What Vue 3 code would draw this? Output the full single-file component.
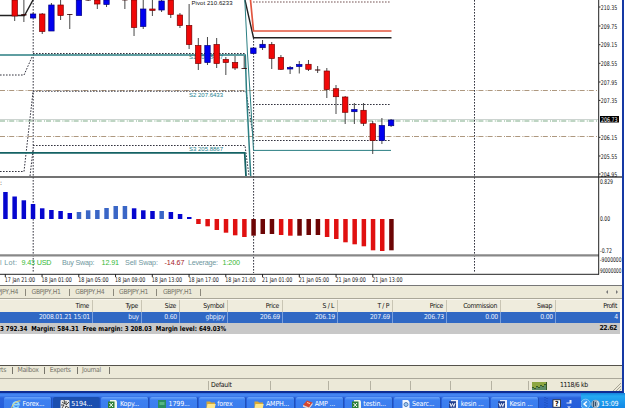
<script setup>
const candleX = i => 14.7 + i * 9.18
// [index, high, low, top, bottom, type]
const candles = [
  [0, 0, 21, 0, 16, 'down'], [1, 0, 22, 14.2, 15.4, 'flat'], [2, 13, 18, 14, 18, 'up'],
  [3, 13, 34, 14, 31.5, 'down'], [4, 3, 31, 5, 31, 'up'], [5, 0, 20, 5, 15.5, 'down'],
  [6, 14, 29, 14, 14.8, 'flat'], [7, 0, 15, 0, 15.5, 'up'], [8, 0, 1, 0, 0.5, 'flat'],
  [9, 0, 9, 0, 4, 'down'], [10, 0, 7, 0, 4.5, 'up'], [12, 0, 9, 0, 0.4, 'flat'],
  [13, 0, 36, 0, 27.5, 'down'], [14, 0, 29, 9, 26.5, 'up'], [15, 0, 16, 9, 10.4, 'down'],
  [16, 0, 12, 1, 10, 'up'], [17, 0, 18, 0, 14.5, 'down'], [18, 13, 28, 15, 25.5, 'down'],
  [19, 4, 49, 25.5, 44.5, 'down'], [20, 38, 70, 45.5, 63.5, 'down'], [21, 37, 65, 45.5, 62.5, 'up'],
  [22, 38, 68, 44.5, 63.5, 'down'], [23, 57, 75, 59.5, 62.5, 'down'], [24, 56, 70, 62.5, 68, 'down'],
  [25, 56, 69, 68, 68.8, 'flat'], [26, 47, 54, 48, 53.5, 'up'], [27, 40, 50, 44.3, 47.7, 'up'],
  [28, 42, 69, 44.5, 58.5, 'down'], [29, 55, 70, 57.5, 69.3, 'down'], [30, 66, 74, 67.5, 69, 'up'],
  [31, 61, 73.5, 64.5, 66.5, 'up'], [32, 60, 71, 64.3, 69.3, 'down'], [33, 66, 73, 69.5, 70.5, 'flat'],
  [34, 68, 98, 71, 89.5, 'down'], [35, 85, 114, 88.7, 96.7, 'down'], [36, 96, 124, 97, 112.3, 'down'],
  [37, 103, 124, 109.5, 111.7, 'up'], [38, 103, 126, 110.3, 123.3, 'down'], [39, 121, 154, 123.7, 140.5, 'down'],
  [40, 118, 144, 125.5, 140.5, 'up'], [41, 119, 127, 120, 125.7, 'up'],
]

const rising = [192, 196.5, 200.3, 204, 208.3, 210, 211, 213, 212, 210.3, 210, 208, 206, 206, 208.3, 210.3, 211, 211, 212, 214, 217]
const falling = [224, 226.3, 230, 232.7, 235.3, 237, 235.7, 234, 234, 235, 235.7, 235.7, 235, 235, 237, 239, 242.3, 244.3, 246.3, 250.3, 251, 250.3]
const light = [8, 9, 10, 11, 12, 13, 17]
const dark = [6, 7, 8, 11, 12, 13, 21]
const bars = [
  ...rising.map((y, i) => ({ x: 3.2 + i * 9.19, y, h: 219 - y, c: light.includes(i) ? 'bar-light' : 'bar-blue' })),
  ...falling.map((y, i) => ({ x: 3.2 + (i + 21) * 9.19, y: 219, h: y - 219, c: dark.includes(i) ? 'bar-dark' : 'bar-red' })),
]

const prices = [['210.35', 7], ['209.75', 26], ['209.15', 44.7], ['208.55', 63.3], ['207.95', 82], ['207.35', 100.4], ['206.15', 137.3], ['205.55', 156], ['204.95', 174]]
const times = ['17 Jan 21:00', '18 Jan 01:00', '18 Jan 05:00', '18 Jan 09:00', '18 Jan 13:00', '18 Jan 17:00', '18 Jan 21:00', '21 Jan 01:00', '21 Jan 05:00', '21 Jan 09:00', '21 Jan 13:00']
const account = [
  ['l Lot:', 0, 17, 'lbl'], ['9.43 USD', 21.5, 30, 'pos'], ['Buy Swap:', 62, 32.5, 'lbl'], ['12.91', 101.5, 17.5, 'pos'],
  ['Sell Swap:', 125, 33, 'lbl'], ['-14.67', 164.5, 20, 'neg'], ['Leverage:', 188, 30, 'lbl'], ['1:200', 222.5, 17.5, 'pos'],
]

const chartTabs = ['GBPJPY,H4', 'GBPJPY,H1', 'GBPJPY,H4', 'GBPJPY,H1', 'GBPJPY,H1']
const columns = [
  ['Time', '2008.01.21 15:01'], ['Type', 'buy'], ['Size', '0.60'], ['Symbol', 'gbpjpy'], ['Price', '206.69'], ['S / L', '206.19'],
  ['T / P', '207.69'], ['Price', '206.73'], ['Commission', '0.00'], ['Swap', '0.00'], ['Profit', '4'],
]
const terminalTabs = ['Alerts', 'Mailbox', 'Experts', 'Journal']
const tasks = [
  ['ie', 'Forex...'], ['mt', '5194...'], ['xls', 'Kopy...'], ['green', '1799...'], ['folder', 'forex'], ['folder', 'AMPH...'],
  ['book', 'AMP ...'], ['xls', 'testin...'], ['find', 'Searc...'], ['doc', 'kesin ...'], ['doc', 'Kesin ...'],
]
</script>

<template>
  <div class="desktop">
    <div class="window">
      <svg class="chart" viewBox="0 0 622 285" width="622" height="285">
        <!-- levels -->
        <path class="bid" d="M0 119.5H598" />
        <path class="dashdot green" d="M0 121H598" />
        <path class="dashdot brown" d="M0 90.5H598M0 136.5H598" />
        <path class="dot" d="M0 75H24L32 57M33 53.5H245M33 91.2H246L253 135M0 171.5H24L33 92M30 176L33 150M33 145.5H245L249 176M253 104.5H391M253 140.5H391" />
        <path class="dot rose" d="M253 2H391" />
        <path class="dot" d="M33.2 0V273M253.6 38V273M474.5 0V273" />
        <path class="black" d="M0 15.5H24.5L33 0M245 0L253.5 37.7H391.5" />
        <path class="salmon" d="M250.5 0L253.5 31H391.5" />
        <path class="teal" d="M0 55H245.3L246.5 92L250.7 176" />
        <path class="teal thin" d="M244.8 0L247.5 54L250.5 100L253.5 150.4H391" />
        <path class="teal thick" d="M0 152.8H244.7L246 176" />

        <g class="tag">
          <text class="ink" x="191.5" y="5.4" textLength="41">Pivot 210.6233</text>
          <text x="189" y="59.4" textLength="34">S1 208.8467</text>
          <text x="189" y="97.4" textLength="34">S2 207.6433</text>
          <text x="189" y="151.4" textLength="34">S3 205.8867</text>
        </g>

        <g v-for="c in candles" :key="c[0]" :class="c[5]">
          <line :x1="candleX(c[0])" :x2="candleX(c[0])" :y1="c[1]" :y2="c[2]" />
          <rect :x="candleX(c[0]) - 2.7" :y="c[3]" width="5.4" :height="c[4] - c[3]" />
        </g>

        <rect v-for="(b, i) in bars" :key="'b' + i" :class="b.c" :x="b.x" :y="b.y" width="4.5" :height="b.h" />

        <!-- pane frames -->
        <path class="split" d="M0 177H622" />
        <path class="split soft" d="M0 255.3H599" />
        <path class="axis" d="M598.7 0V274.5M0 274.3H599" />

        <g class="scale">
          <g v-for="p in prices" :key="p[0]">
            <path class="axis" :d="`M599 ${p[1]}h1.5`" />
            <text x="600.8" :y="p[1] + 2.5" textLength="16.4" lengthAdjust="spacingAndGlyphs">{{ p[0] }}</text>
          </g>
          <rect x="600" y="116" width="19" height="6.5" />
          <text class="now" x="601" y="121.7" textLength="16.5" lengthAdjust="spacingAndGlyphs">206.73</text>
          <text x="600" y="184.4" textLength="13" lengthAdjust="spacingAndGlyphs">0.829</text>
          <text x="600" y="221.3" textLength="10" lengthAdjust="spacingAndGlyphs">0.00</text>
          <text x="600" y="253.3" textLength="12" lengthAdjust="spacingAndGlyphs">-0.72</text>
          <text x="600" y="262.4" textLength="21.5" lengthAdjust="spacingAndGlyphs">-9000000</text>
          <text x="600" y="272.9" textLength="21.5" lengthAdjust="spacingAndGlyphs">90000000</text>
          <text x="0" y="185">:</text>
          <g v-for="(t, i) in times" :key="t + i">
            <path class="axis" :d="`M${5.3 + i * 36.75} 274v3`" />
            <text :x="4.8 + i * 36.75" y="282" textLength="30.3" lengthAdjust="spacingAndGlyphs">{{ t }}</text>
          </g>
        </g>
        <g class="account">
          <text v-for="a in account" :key="a[0]" :class="a[3]" :x="a[1]" y="264.6" :textLength="a[2]">{{ a[0] }}</text>
        </g>
      </svg>

      <div class="chart-tabs">
        <span v-for="(t, i) in chartTabs" :key="i" class="chart-tab">{{ t }}</span>
        <svg class="arrows" width="14" height="6" viewBox="0 0 14 6">
          <path d="M3 1L1 3L3 5ZM11 1L13 3L11 5Z" />
        </svg>
      </div>

      <div class="orders">
        <div class="row head"><span v-for="(c, i) in columns" :key="i">{{ c[0] }}</span></div>
        <div class="row order"><span v-for="(c, i) in columns" :key="i">{{ c[1] }}</span></div>
        <div class="summary">
          <svg width="228" height="11"><text x="0" y="8" textLength="226" lengthAdjust="spacingAndGlyphs">3 792.34&#160; Margin: 584.31&#160; Free margin: 3 208.03&#160; Margin level: 649.03%</text></svg>
          <b>22.62</b>
        </div>
      </div>

      <div class="terminal-tabs">
        <span v-for="t in terminalTabs" :key="t">{{ t }}</span>
      </div>

      <div class="status">
        <span></span><span>Default</span><span></span><span></span><span></span><span></span><span></span>
        <span class="traffic">
          <svg width="15" height="8" viewBox="0 0 15 8">
            <rect width="15" height="8" fill="#375a24" />
            <path d="M1 0V5M3 0V6M5 0V4M7 0V5M9 0V3M11 0V4M13 0V2" stroke="#b3c850" stroke-width="1.4" />
            <path d="M1 6V8M3 7V8M5 5V8M7 6V8M9 4V8M11 5V8M13 3V8" stroke="#7fb6a0" stroke-width="1.1" />
          </svg>
          1118/6 kb
        </span>
        <svg class="grip" width="8" height="8" viewBox="0 0 8 8"><path d="M0 8L8 0M3 8L8 3M6 8L8 6" /></svg>
      </div>
    </div>

    <div class="taskbar">
      <div v-for="(t, i) in tasks" :key="i" class="task" :class="{ active: i === 1 }">
        <svg class="icon" width="10" height="9" viewBox="0 0 10 9">
          <g v-if="t[0] === 'ie'">
            <path d="M7.6 6.4A3 3 0 1 1 8 4.6H3" fill="none" stroke="#8fdcff" stroke-width="1.6" />
            <path d="M1 8.5C-.5 6 6 0 9.4 1" fill="none" stroke="#f2d264" />
          </g>
          <g v-else-if="t[0] === 'mt'">
            <rect x=".5" width="9" height="9" rx="1" fill="#e8e8e8" />
            <path d="M2 2L5 4L4 0M6 1L6 5L9 2M1 5L4 5L2 8M5 9L6 6L9 8" fill="none" stroke="#222" stroke-width=".8" />
          </g>
          <g v-else-if="t[0] === 'xls'">
            <path d="M2 0H8L9 1.5V9H2Z" fill="#eef5e8" />
            <rect y="1.5" width="6.5" height="6.5" fill="#2b7d35" />
            <path d="M1.5 3L5 7M5 3L1.5 7" stroke="#fff" />
          </g>
          <g v-else-if="t[0] === 'green'">
            <rect x="1" width="8" height="9" fill="#2a8d62" />
            <path d="M2.5 2H7.5V5H2.5Z" fill="#56b781" />
          </g>
          <g v-else-if="t[0] === 'folder'">
            <path d="M.5 1.5H4L5 2.5H9V8.5H.5Z" fill="#d9a936" />
            <path d="M1.5 4H9.8L8.6 8.5H.5Z" fill="#fbe68c" />
          </g>
          <g v-else-if="t[0] === 'book'">
            <path d="M0 5L4 .5L9.5 2.5L6 7.5Z" fill="#d8472f" />
            <path d="M0 5L6 7.5L9.5 2.5V4.5L6 9L0 6.8Z" fill="#f3d5c6" />
            <path d="M4 2.5L7 3.6" stroke="#ffd0b0" />
          </g>
          <g v-else-if="t[0] === 'find'">
            <path d="M1.5 0H7L8.5 2V9H1.5Z" fill="#f1f6ff" />
            <circle cx="5" cy="4.5" r="2" fill="#9cc8f0" stroke="#5279b5" />
          </g>
          <g v-else>
            <path d="M2 0H9V9H2Z" fill="#eef1fb" />
            <rect y="1.2" width="7" height="6.6" fill="#24418f" />
            <path d="M1 3L2.2 6.5L3.5 3.5L4.8 6.5L6 3" fill="none" stroke="#fff" stroke-width=".9" />
          </g>
        </svg>
        <span>{{ t[1] }}</span>
      </div>
      <div class="lang">
        <svg width="36" height="15" viewBox="0 0 36 15">
          <path d="M2 4V15M4 5V15" stroke="#1b47ae" stroke-dasharray="1 1.5" />
          <rect x="10" y="6.8" width="7.5" height="7.4" fill="#fff" stroke="#222" stroke-width=".8" />
          <text x="11.9" y="13.1">?</text>
          <path d="M23.5 9.5H26.5V7H28.5V10.5H23.5Z" fill="#e6efff" />
          <path d="M24 13.5H28L26 15Z" fill="#fff" />
        </svg>
      </div>
      <div class="tray">
        <svg width="20" height="13" viewBox="0 0 20 13">
          <circle cx="4.5" cy="7" r="4.8" fill="#3f9df0" stroke="#a5d8ff" stroke-width=".7" />
          <path d="M5.8 4.5L3 7L5.8 9.5" fill="none" stroke="#fff" stroke-width="1.4" />
          <circle cx="14.5" cy="7" r="4.3" fill="#94abc0" />
          <path d="M12.5 4V10M14.5 5V9" stroke="#34516e" />
          <path d="M16.5 4Q19 7 16.5 10" fill="none" stroke="#e9f3fb" />
        </svg>
        <span>15:09</span>
      </div>
    </div>
  </div>
</template>

<style>
body {
  overflow: hidden;
}
</style>

<style scoped>
.desktop {
  width: 625px;
  height: 408px;
  overflow: hidden;
  display: flex;
  flex-direction: column;
  font-family: "DejaVu Sans Condensed", "DejaVu Sans", sans-serif;
  font-stretch: condensed;
  font-size: 6.8px;
  letter-spacing: -0.35px;
  color: #111;
  background: #fff;
}

.window {
  width: 622px;
  height: 391px;
  border-right: 2px solid #1539a4;
  border-bottom: 2px solid #0f2d92;
  background: #fff;
}

.chart {
  display: block;
  overflow: hidden;
  letter-spacing: 0;
}

.chart path {
  fill: none;
}

.bid { stroke: #bfc9c4; stroke-width: 0.8; }
.dashdot { stroke-dasharray: 5 2.2 1 1; }
.green { stroke: #7fac87; stroke-width: 1.2; }
.brown { stroke: #a58c70; stroke-width: 0.9; }
.dot { stroke: #33333f; stroke-dasharray: 1.6 1.4; stroke-width: 1; }
.rose { stroke: #a48d8d; stroke-width: 1.3; }
.black { stroke: #222; stroke-width: 1.4; }
.salmon { stroke: #e2553f; stroke-width: 1.7; }
.teal { stroke: #2b7f83; stroke-width: 1.5; }
.thin { stroke-width: 1; }
.thick { stroke: #146264; stroke-width: 1.8; }
.split { stroke: #444; stroke-width: 1.5; }
.soft { stroke: #888; stroke-width: 2.2; }
.axis { stroke: #222; stroke-width: 1; }

.tag {
  font-family: "Liberation Sans", sans-serif;
  font-size: 6px;
  fill: #23808c;
}

.ink { fill: #111; }

.up line, .down line, .flat line { stroke: #333; stroke-width: 0.9; }
.up rect { fill: #0000f0; stroke: #000080; stroke-width: 0.7; }
.down rect { fill: #f00808; stroke: #7a0000; stroke-width: 0.7; }
.flat rect { fill: #300; }

.bar-blue { fill: #0505cf; }
.bar-light { fill: #3a66c6; }
.bar-red { fill: #e01010; }
.bar-dark { fill: #6c0505; }

.scale { font-size: 6.5px; fill: #111; }
.scale rect { fill: #000; }
.scale .now { fill: #fff; }

.account {
  font-family: "Liberation Sans", sans-serif;
  font-size: 7.2px;
}

.lbl { fill: #6f97a0; }
.pos { fill: #36b936; }
.neg { fill: #a52028; }

.chart-tabs {
  display: flex;
  align-items: center;
  height: 12px;
  border-top: 1px solid #777;
  border-bottom: 1px solid #aaa799;
  background: #ece9d8;
  color: #77756b;
}

.chart-tab {
  width: 43.8px;
  height: 7px;
  line-height: 7px;
  box-sizing: border-box;
  padding-left: 5.5px;
  border-right: 1px solid #8b887c;
  white-space: nowrap;
}

.chart-tab:first-child {
  width: 26px;
  padding: 0 7px 0 0;
  display: flex;
  justify-content: flex-end;
  overflow: hidden;
}

.arrows {
  margin-left: auto;
  margin-right: 3px;
  fill: #777;
}

.orders {
  width: 620px;
  height: 66px;
}

.row {
  display: grid;
  grid-template-columns: 93px 49px 38px 48px 55px 55px 55px 54px 54px 55px 64px;
  text-align: right;
  line-height: 11px;
  height: 11px;
  white-space: nowrap;
}

.head {
  height: 12px;
  line-height: 13px;
  border-top: 1px solid #f8f6ee;
  background: #efecdd;
}

.head span {
  padding-right: 3px;
  border-right: 1px solid #c9c5b4;
}

.order {
  background: #3068c4;
  color: #eaf2ff;
  letter-spacing: -0.22px;
}

.order span {
  padding-right: 2px;
  border-right: 1px solid #7ba0dc;
}

.row span:last-child { border-right: 0; }

.summary {
  display: flex;
  justify-content: space-between;
  height: 11px;
  line-height: 11px;
  background: #c8c8c8;
  font-weight: bold;
}

.summary svg { letter-spacing: 0; }
.summary b { padding-right: 3px; }

.terminal-tabs {
  display: flex;
  align-items: flex-start;
  height: 12px;
  border-top: 1px solid #55524b;
  border-bottom: 1px solid #aaa799;
  background: #ece9d8;
  color: #77756b;
}

.terminal-tabs span {
  width: 32.3px;
  height: 7px;
  line-height: 7px;
  margin-top: 1px;
  box-sizing: border-box;
  padding-left: 4.5px;
  border-right: 1px solid #77756b;
}

.terminal-tabs span:first-child {
  width: 13px;
  padding: 0 6px 0 0;
  display: flex;
  justify-content: flex-end;
  overflow: hidden;
}

.status {
  display: flex;
  align-items: flex-end;
  height: 12px;
  background: #ece9d8;
}

.status > span {
  height: 9px;
  line-height: 9px;
  margin-bottom: 1px;
  box-sizing: border-box;
  border-right: 1px solid #b5b2a2;
  width: 41px;
  padding-left: 2px;
}

.status > span:nth-child(1) { width: 209px; }
.status > span:nth-child(2) { width: 62px; letter-spacing: -0.25px; }
.status > span:nth-child(3) { width: 58px; }
.status > span:nth-child(4) { width: 42px; }
.status > span:nth-child(5) { width: 40px; }
.status > span:nth-child(6) { width: 40px; }

.status > span:nth-child(7) { width: 78px; background: linear-gradient(#b5b2a2, #b5b2a2) 40px 0 / 1px 9px no-repeat; }

.status > .traffic {
  width: 76px;
  border: 0;
  display: flex;
  gap: 13px;
  align-items: center;
  padding-left: 3px;
  white-space: nowrap;
}

.grip {
  margin-left: auto;
  margin-right: 1px;
  stroke: #a5a293;
}

.taskbar {
  display: flex;
  height: 15px;
  padding-left: 4px;
  background: linear-gradient(#2f6ce0 0, #4a8cf5 2px, #2a62dc 5px, #245edb 15px);
  color: #fff;
  font-size: 7px;
  letter-spacing: -0.15px;
}

.task {
  display: flex;
  align-items: center;
  gap: 1.5px;
  box-sizing: border-box;
  flex: none;
  width: 47.7px;
  height: 14px;
  margin: 4px 1px 0 0;
  padding-left: 7px;
  border-radius: 2px 2px 0 0;
  background: linear-gradient(#6ba4fa, #3d80f0 3px, #3a7bec);
  border-right: 1px solid #1f51bb;
  white-space: nowrap;
}

.task.active {
  background: #1b4fb0;
}

.icon { flex: none; }

.lang {
  margin-left: auto;
  width: 38px;
}

.lang text { font-size: 7px; font-weight: bold; }

.tray {
  display: flex;
  align-items: center;
  width: 44px;
  padding-top: 6px;
  box-sizing: border-box;
  background: linear-gradient(#1482dc, #25aaf2 3px, #1288e6);
}

.tray svg { flex: none; }
</style>
